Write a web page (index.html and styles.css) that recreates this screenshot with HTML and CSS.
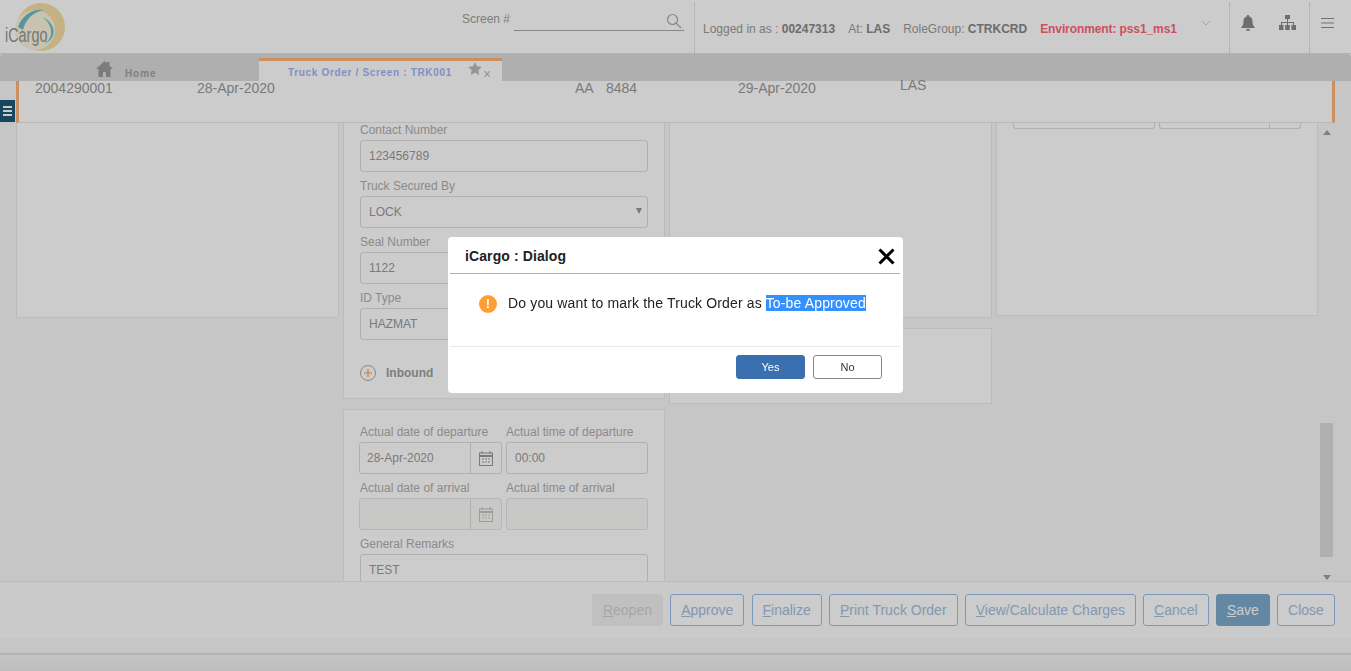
FILE: index.html
```html
<!DOCTYPE html>
<html lang="en">
<head>
    <meta charset="UTF-8">
    <title>iCargo</title>
    <link rel="stylesheet" href="styles.css">
</head>
<body>
    <header class="topbar">
        <div class="logo">
            <svg width="70" height="52" viewBox="0 0 70 52">
                <circle cx="41" cy="27" r="24" fill="#f6dfa6"/>
                <circle cx="35" cy="30" r="20" fill="#fbf3dc"/>
                <path d="M18 27 C22 15 33 8 44 10 C34 12 26 18 23 30Z" fill="#6cbcc2"/>
                <path d="M42 17 C56 22 58 39 44 44 C47 42 52 38 51 30 C50 25 47 20 42 17Z" fill="#66c6ca"/>
            </svg>
            <span class="logo-text">iCargo</span>
        </div>
        <div class="screen-search">
            <label>Screen #</label>
            <div class="search-input">
                <svg width="16" height="16" viewBox="0 0 16 16" fill="none" stroke="#aaa" stroke-width="1.2"><circle cx="6.5" cy="6.5" r="5"/><path d="M10.2 10.2 15 15"/></svg>
            </div>
        </div>
        <div class="user-info">
            <span>Logged in as : <b>00247313</b></span>
            <span>At: <b>LAS</b></span>
            <span>RoleGroup: <b>CTRKCRD</b></span>
            <span class="env">Environment: pss1_ms1</span>
            <svg class="chevron" width="10" height="6" viewBox="0 0 10 6" fill="none" stroke="#ccc"><path d="M1 1l4 4 4-4"/></svg>
        </div>
        <div class="top-icon">
            <svg width="14" height="16" viewBox="0 0 14 16" fill="#8a8a8a"><path d="M7 0c1 0 1.300.7 1.300 1.400C10.800 2 11.500 4 11.500 6.500c0 3 .8 4.300 2.200 5.700v.8H.3v-.8C1.700 10.800 2.500 9.500 2.500 6.500 2.500 4 3.200 2 5.700 1.400 5.700.7 6 0 7 0zM5 14h4c0 1.200-.9 2-2 2s-2-.8-2-2z"/></svg>
        </div>
        <div class="top-icon top-icon-org">
            <svg width="17" height="15" viewBox="0 0 17 15" fill="#8a8a8a"><rect x="6" y="0" width="5" height="4"/><rect x="0" y="10" width="4.500" height="5"/><rect x="6.200" y="10" width="4.500" height="5"/><rect x="12.500" y="10" width="4.500" height="5"/><path d="M8 4h1v3h6v3h-1V8H9v2H8V8H3v2H2V7h6z"/></svg>
        </div>
        <div class="top-icon top-icon-menu">
            <svg width="13" height="10" viewBox="0 0 13 10" stroke="#8f8f8f"><path d="M0 .5h13M0 5h13M0 9.500h13"/></svg>
        </div>
    </header>

    <nav class="tabbar">
        <div class="tab-home">
            <svg width="17" height="16" viewBox="0 0 17 16" fill="#9c9c9c"><path d="M8.500 0 11 2.300V1h2.500v3.700L17 8h-2.500v8H10v-5H7v5H2.500V8H0z"/></svg>
            <span>Home</span>
        </div>
        <div class="tab-active">
            <span>Truck Order / Screen : TRK001</span>
            <svg class="star" width="14" height="13" viewBox="0 0 24 23" fill="#bcbcbc"><path d="M12 0l3.700 7.600 8.300 1.200-6 5.900 1.400 8.300L12 19l-7.400 4L6 14.700 0 8.800l8.300-1.200z"/></svg>
            <span class="tab-close">&times;</span>
        </div>
    </nav>

    <section class="summary">
        <span class="s1">2004290001</span>
        <span class="s2">28-Apr-2020</span>
        <span class="s3">AA</span>
        <span class="s4">8484</span>
        <span class="s5">29-Apr-2020</span>
        <span class="s6">LAS</span>
    </section>
    <button class="side-toggle" aria-label="Menu"><span></span><span></span><span></span></button>

    <main class="content">
        <div class="columns">
            <div class="col">
                <div class="card card-a"></div>
            </div>
            <div class="col col-narrow">
                <div class="card card-b">
                    <label class="clip-label">Contact Number</label>
                    <div class="field">123456789</div>
                    <label>Truck Secured By</label>
                    <div class="field select">LOCK<i class="caret"></i></div>
                    <label>Seal Number</label>
                    <div class="field">1122</div>
                    <label>ID Type</label>
                    <div class="field">HAZMAT</div>
                    <div class="inbound">
                        <svg width="16" height="16" viewBox="0 0 16 16" fill="none"><circle cx="8" cy="8" r="7.500" stroke="#a8a8a8"/><path d="M8 4v8M4 8h8" stroke="#ffb578" stroke-width="1.600"/></svg>
                        <b>Inbound</b>
                    </div>
                </div>
                <div class="card card-c">
                    <div class="row">
                        <div class="cell">
                            <label>Actual date of departure</label>
                            <div class="field date"><span>28-Apr-2020</span><i class="cal"><svg width="14" height="15" viewBox="0 0 14 15" fill="none" stroke="#999"><rect x=".5" y="2" width="13" height="12.500"/><path d="M.5 5h13" stroke-width="2"/><path d="M3 0v3M11 0v3M3 8h2M6 8h2M9 8h2M3 11h2M6 11h2M9 11h2"/></svg></i></div>
                        </div>
                        <div class="cell">
                            <label>Actual time of departure</label>
                            <div class="field">00:00</div>
                        </div>
                    </div>
                    <div class="row">
                        <div class="cell">
                            <label>Actual date of arrival</label>
                            <div class="field date off"><span></span><i class="cal"><svg width="14" height="15" viewBox="0 0 14 15" fill="none" stroke="#c4c4c4"><rect x=".5" y="2" width="13" height="12.500"/><path d="M.5 5h13" stroke-width="2"/><path d="M3 0v3M11 0v3M3 8h2M6 8h2M9 8h2M3 11h2M6 11h2M9 11h2"/></svg></i></div>
                        </div>
                        <div class="cell">
                            <label>Actual time of arrival</label>
                            <div class="field off"></div>
                        </div>
                    </div>
                    <label>General Remarks</label>
                    <div class="field tall">TEST</div>
                </div>
            </div>
            <div class="col">
                <div class="card card-d"></div>
                <div class="card card-e"></div>
            </div>
            <div class="col col-narrow">
                <div class="card card-f">
                    <div class="stub"></div>
                    <div class="stub stub-split"><i></i></div>
                </div>
            </div>
        </div>
        <div class="scrollbar">
            <i class="arrow-up"></i>
            <div class="thumb"></div>
            <i class="arrow-down"></i>
        </div>
    </main>

    <footer class="actions">
        <button class="btn disabled"><u>R</u>eopen</button>
        <button class="btn"><u>A</u>pprove</button>
        <button class="btn"><u>F</u>inalize</button>
        <button class="btn"><u>P</u>rint Truck Order</button>
        <button class="btn"><u>V</u>iew/Calculate Charges</button>
        <button class="btn"><u>C</u>ancel</button>
        <button class="btn primary"><u>S</u>ave</button>
        <button class="btn btn-close">Close</button>
    </footer>
    <div class="band"></div>
    <div class="page-bottom"></div>

    <div class="overlay"></div>
    <div class="dialog">
        <div class="dialog-head">
            <h2>iCargo : Dialog</h2>
            <svg width="17" height="17" viewBox="0 0 17 17" stroke="#000" stroke-width="3"><path d="M1.500 1.500l14 14M15.500 1.500l-14 14"/></svg>
        </div>
        <div class="dialog-body">
            <span class="warn">!</span>
            <p>Do you want to mark the Truck Order as <mark>To-be Approved</mark></p>
        </div>
        <div class="dialog-foot">
            <button class="dlg-btn yes">Yes</button>
            <button class="dlg-btn">No</button>
        </div>
    </div>
</body>
</html>
```

FILE: styles.css
```css
* {
    box-sizing: border-box;
}
html, body {
    height: 100%;
}
body {
    margin: 0;
    height: 671px;
    overflow: hidden;
    background-color: #f8f8f8;
    font-family: "Liberation Sans", Arial, sans-serif;
    font-size: 12px;
    color: #999;
}

/* top bar */
.topbar {
    display: flex;
    height: 54px;
    background-color: #fff;
    border-bottom: 1px solid #e0e0e0;
}
.logo {
    position: relative;
    width: 70px;
    padding-top: 0;
}
.logo-text {
    position: absolute;
    left: 5px;
    top: 24px;
    font-family: "Liberation Sans", sans-serif;
    font-size: 20px;
    transform: scaleX(.72);
    transform-origin: left;
    color: #959595;
}
.screen-search {
    display: flex;
    align-items: flex-start;
    margin-left: 392px;
    width: 232px;
    padding-top: 11px;
    color: #a0a0a0;
}
.screen-search label {
    width: 52px;
    font-size: 12px;
    color: #a0a0a0;
}
.search-input {
    display: flex;
    justify-content: flex-end;
    width: 170px;
    height: 20px;
    padding-top: 2px;
    padding-right: 2px;
    border-bottom: 1px solid #aaa;
}
.user-info {
    display: flex;
    align-items: center;
    width: 535px;
    height: 50px;
    margin-top: 3px;
    padding: 2px 0 0 8px;
    border-left: 1px dotted #ccc;
    font-size: 12px;
    color: #999;
}
.user-info span {
    margin-right: 13px;
}
.user-info b {
    color: #888;
}
.user-info .env {
    margin-right: 24px;
    color: #ff6478;
    font-weight: bold;
    letter-spacing: -.1px;
}
.chevron {
    margin-top: -12px;
}
.top-icon {
    display: flex;
    justify-content: center;
    width: 36px;
    height: 50px;
    margin-top: 3px;
    padding-top: 12px;
    border-left: 1px dotted #ccc;
}
.top-icon-org {
    width: 44px;
    padding-top: 12px;
    border-left: 0;
}
.top-icon-menu {
    width: 42px;
    padding-top: 15px;
    padding-right: 6px;
}

/* tabs */
.tabbar {
    display: flex;
    height: 27px;
    background-color: #dbdbdb;
    border-radius: 4px 4px 0 0;
}
.tab-home {
    display: flex;
    align-items: flex-start;
    width: 259px;
    padding: 7px 0 0 96px;
    font-size: 10px;
    font-weight: bold;
    letter-spacing: .9px;
    color: #a0a0a0;
}
.tab-home span {
    margin: 7px 0 0 12px;
}
.tab-active {
    position: relative;
    width: 243px;
    margin-top: 4px;
    padding: 6px 0 0 29px;
    background-color: #fff;
    border-top: 3px solid #ffb578;
    font-size: 10px;
    font-weight: bold;
    letter-spacing: .67px;
    color: #a0b4fa;
}
.star {
    position: absolute;
    left: 209px;
    top: 1px;
}
.tab-close {
    position: absolute;
    left: 224px;
    top: 5px;
    font-size: 14px;
    font-weight: normal;
    color: #bbb;
}

/* summary strip, its values do not share a grid */
.summary {
    position: relative;
    height: 42px;
    margin: 0 16px;
    background-color: #fff;
    border-left: 3px solid #ffb578;
    border-right: 3px solid #ffb578;
    border-bottom: 1px solid #e8e8e8;
    font-size: 14px;
    color: #999;
}
.summary span {
    position: absolute;
    top: -1px;
}
.s1 { left: 16px; }
.s2 { left: 178px; }
.s3 { left: 556px; }
.s4 { left: 587px; }
.s5 { left: 719px; }
.summary .s6 { left: 881px; top: -4px; }
.side-toggle {
    position: absolute;
    left: 0;
    top: 100px;
    display: flex;
    flex-direction: column;
    justify-content: center;
    gap: 2px;
    width: 15px;
    height: 22px;
    padding: 0 3px;
    border: 0;
    background-color: #1d5876;
}
.side-toggle span {
    height: 2px;
    background-color: #fff;
}

/* form area */
.content {
    display: flex;
    height: 458px;
    padding-left: 16px;
    overflow: hidden;
    background-color: #f8f8f8;
}
.columns {
    display: flex;
    align-items: flex-start;
    gap: 4px;
}
.col {
    display: flex;
    flex-direction: column;
    width: 323px;
}
.col-narrow {
    width: 322px;
}
.card {
    padding: 0 16px;
    background-color: #fff;
    border: 1px solid #ebebeb;
    border-top: 0;
}
.card-a { height: 195px; }
.card-b {
    height: 276px;
    margin-bottom: 10px;
}
.card-c {
    height: 200px;
    padding-top: 14px;
    border-top: 1px solid #ebebeb;
}
.card-d { height: 195px; }
.card-e {
    height: 76px;
    margin-top: 10px;
    border-top: 1px solid #ebebeb;
}
.card-f {
    display: flex;
    gap: 4px;
    height: 193px;
}
.stub {
    width: 142px;
    height: 6px;
    background-color: #fff;
    border: 1px solid #dcdcdc;
    border-top: 0;
    border-radius: 0 0 3px 3px;
}
.stub-split i {
    display: block;
    width: 31px;
    height: 5px;
    margin-left: auto;
    border-left: 1px solid #dcdcdc;
}
label {
    display: block;
    height: 18px;
    padding-top: 1px;
    font-size: 12px;
    color: #aeaeae;
}
.clip-label {
    height: 17px;
    padding-top: 0;
}
.field {
    height: 32px;
    margin-bottom: 6px;
    padding: 0 8px;
    background-color: #fff;
    border: 1px solid #dcdcdc;
    border-radius: 3px;
    font-size: 12px;
    line-height: 30px;
    color: #999;
}
.select {
    position: relative;
}
.caret {
    position: absolute;
    right: 5px;
    top: 11px;
    border: 3.5px solid transparent;
    border-top: 6px solid #999;
    border-bottom: 0;
}
.inbound {
    display: flex;
    align-items: center;
    gap: 10px;
    margin-top: 25px;
    font-size: 12px;
    color: #a0a0a0;
}
.row {
    display: flex;
    gap: 4px;
}
.cell {
    width: 142px;
}
.date {
    display: flex;
    margin-left: -1px;
    padding: 0 0 0 7px;
}
.date span {
    flex: 1;
}
.cal {
    display: flex;
    align-items: center;
    justify-content: center;
    width: 31px;
    border-left: 1px solid #dcdcdc;
}
.off {
    background-color: #fafaf8;
    border-color: #e4e4e4;
}
.tall {
    width: 288px;
    height: 60px;
}
.scrollbar {
    position: relative;
    flex: 1;
}
.arrow-up, .arrow-down {
    position: absolute;
    left: 5px;
    border: 4px solid transparent;
}
.arrow-up {
    top: 7px;
    border-top: 0;
    border-bottom: 5px solid #a0a0a0;
}
.arrow-down {
    bottom: 1px;
    border-bottom: 0;
    border-top: 5px solid #a0a0a0;
}
.thumb {
    position: absolute;
    left: 2px;
    top: 300px;
    width: 13px;
    height: 134px;
    background-color: #dcdcdc;
}

/* bottom buttons */
.actions {
    display: flex;
    justify-content: flex-end;
    align-items: flex-start;
    gap: 7.2px;
    height: 57px;
    padding: 12px 16px 0 0;
    background-color: #fdfdfd;
    border-top: 1px solid #ececec;
}
.btn {
    height: 32px;
    padding: 0 10px;
    background-color: #fff;
    border: 1px solid #9cbee6;
    border-radius: 3px;
    font-family: "Liberation Sans", Arial, sans-serif;
    font-size: 14px;
    color: #a6bedc;
}
.btn-close {
    width: 58px;
    padding: 0;
}
.btn.disabled {
    border-color: #f0f0f0;
    background-color: #f0f0f0;
    color: #d0d0d0;
}
.btn.primary {
    background-color: #7daace;
    border-color: #7daace;
    color: #fff;
}
.band {
    height: 8px;
    background-color: #f8f8f8;
}
.page-bottom {
    height: 25px;
    margin-top: 7px;
    background: linear-gradient(#f5f5f5, #ebebeb);
    border-top: 2px solid #e1e1e1;
}

/* modal */
.overlay {
    position: fixed;
    top: 0;
    right: 0;
    bottom: 0;
    left: 0;
    background-color: rgba(0, 0, 0, .2);
}
.dialog {
    position: fixed;
    left: 448px;
    top: 237px;
    display: flex;
    flex-direction: column;
    width: 455px;
    height: 156px;
    background-color: #fff;
    border-radius: 4px;
    color: #222;
}
.dialog-head {
    display: flex;
    justify-content: space-between;
    align-items: center;
    height: 37px;
    margin: 0 3px 0 2px;
    padding: 2px 5px 0 15px;
    border-bottom: 1px solid #aab0b5;
}
.dialog-head h2 {
    margin: 0;
    font-size: 14px;
    font-weight: bold;
    letter-spacing: .1px;
    color: #222;
}
.dialog-body {
    display: flex;
    align-items: flex-start;
    gap: 11px;
    height: 73px;
    margin: 0 3px 0 2px;
    padding: 20px 0 0 29px;
    border-bottom: 1px solid #e8e8e8;
}
.dialog-body p {
    margin: 0;
    font-size: 14px;
    line-height: 18px;
    letter-spacing: .15px;
}
mark {
    background-color: #3390ff;
    color: #fff;
}
.warn {
    width: 18px;
    height: 18px;
    margin-top: 1px;
    background-color: #ff9c33;
    border-radius: 50%;
    color: #fff;
    font-size: 13px;
    font-weight: bold;
    line-height: 18px;
    text-align: center;
}
.dialog-foot {
    display: flex;
    justify-content: flex-end;
    gap: 8px;
    padding: 8px 21px 0 0;
}
.dlg-btn {
    width: 69px;
    height: 24px;
    background-color: #fff;
    border: 1px solid #888;
    border-radius: 3px;
    font-family: "Liberation Sans", Arial, sans-serif;
    font-size: 11px;
    color: #333;
}
.dlg-btn.yes {
    background-color: #3a70b0;
    border-color: #3a70b0;
    color: #fff;
}
```
